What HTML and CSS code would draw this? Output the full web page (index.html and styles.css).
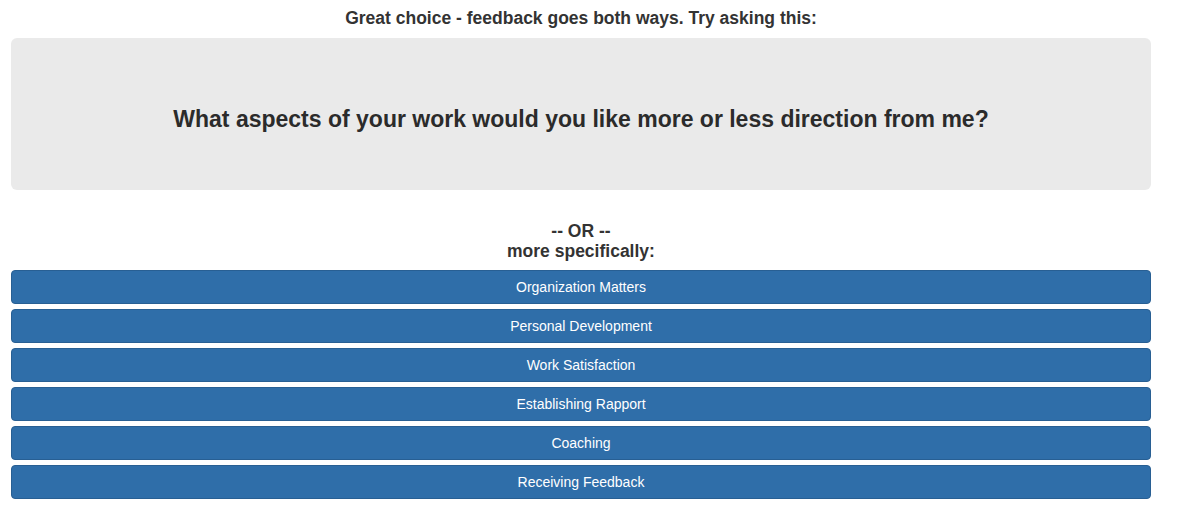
FILE: index.html
```html
<!DOCTYPE html>
<html>
<head>
<meta charset="utf-8">
<link rel="stylesheet" href="styles.css">
</head>
<body>
<div class="container">
  <h4 class="intro">Great choice - feedback goes both ways. Try asking this:</h4>
  <div class="jumbotron">
    <h3 class="question">What aspects of your work would you like more or less direction from me?</h3>
  </div>
  <h4 class="or">-- OR --<br>more specifically:</h4>
  <div class="buttons">
    <button class="btn">Organization Matters</button>
    <button class="btn">Personal Development</button>
    <button class="btn">Work Satisfaction</button>
    <button class="btn">Establishing Rapport</button>
    <button class="btn">Coaching</button>
    <button class="btn">Receiving Feedback</button>
  </div>
</div>
</body>
</html>
```

FILE: styles.css
```css
html, body {
  margin: 0;
  padding: 0;
  background: #ffffff;
}
body {
  font-family: "Liberation Sans", Arial, Helvetica, sans-serif;
  color: #333333;
}
.container {
  width: 1140px;
  margin-left: 11px;
}
.intro {
  margin: 0;
  padding-top: 8px;
  height: 38px;
  box-sizing: border-box;
  font-size: 17.5px;
  line-height: 20px;
  font-weight: 600;
  text-align: center;
}
.jumbotron {
  background: #eaeaea;
  border-radius: 6px;
  height: 152px;
  box-sizing: border-box;
  padding-top: 67px;
  text-align: center;
}
.question {
  margin: 0;
  font-size: 23px;
  line-height: 28px;
  font-weight: 700;
  color: #2b2b2b;
}
.or {
  margin: 0;
  padding-top: 31px;
  height: 80px;
  box-sizing: border-box;
  font-size: 17.5px;
  line-height: 20px;
  font-weight: 600;
  text-align: center;
}
.buttons {
  display: flex;
  flex-direction: column;
  gap: 5px;
}
.btn {
  display: block;
  width: 100%;
  height: 34px;
  margin: 0;
  padding: 0;
  background: #2f6ea9;
  border: 1px solid #285f93;
  border-radius: 4px;
  color: #ffffff;
  font-family: "Liberation Sans", Arial, Helvetica, sans-serif;
  font-size: 14px;
  line-height: 20px;
  text-align: center;
}
```
